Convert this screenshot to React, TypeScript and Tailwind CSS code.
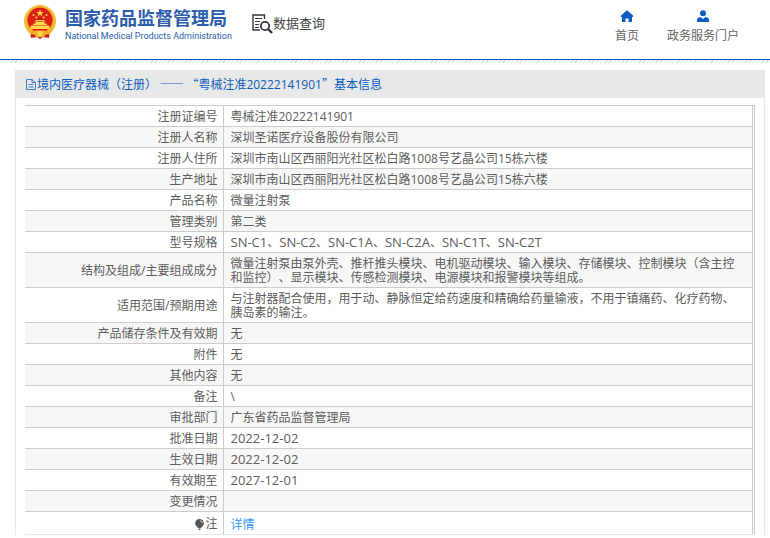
type Row = {
  label: string
  value: string
}

const rows: Row[] = [
  { label: '注册证编号', value: '粤械注准20222141901' },
  { label: '注册人名称', value: '深圳圣诺医疗设备股份有限公司' },
  { label: '注册人住所', value: '深圳市南山区西丽阳光社区松白路1008号艺晶公司15栋六楼' },
  { label: '生产地址', value: '深圳市南山区西丽阳光社区松白路1008号艺晶公司15栋六楼' },
  { label: '产品名称', value: '微量注射泵' },
  { label: '管理类别', value: '第二类' },
  { label: '型号规格', value: 'SN-C1、SN-C2、SN-C1A、SN-C2A、SN-C1T、SN-C2T' },
  {
    label: '结构及组成/主要组成成分',
    value:
      '微量注射泵由泵外壳、推杆推头模块、电机驱动模块、输入模块、存储模块、控制模块（含主控和监控）、显示模块、传感检测模块、电源模块和报警模块等组成。',
  },
  {
    label: '适用范围/预期用途',
    value:
      '与注射器配合使用，用于动、静脉恒定给药速度和精确给药量输液，不用于镇痛药、化疗药物、胰岛素的输注。',
  },
  { label: '产品储存条件及有效期', value: '无' },
  { label: '附件', value: '无' },
  { label: '其他内容', value: '无' },
  { label: '备注', value: '\\' },
  { label: '审批部门', value: '广东省药品监督管理局' },
  { label: '批准日期', value: '2022-12-02' },
  { label: '生效日期', value: '2022-12-02' },
  { label: '有效期至', value: '2027-12-01' },
  { label: '变更情况', value: '' },
]

// Model codes and dates are set one size up from the Chinese text
function CellText({ value }: { value: string }) {
  return value.split(/([A-Z0-9]+-[A-Z0-9-]+)/).map((part, index) =>
    index % 2 === 1 ? (
      <span key={index} className="text-[13px] leading-none">
        {part}
      </span>
    ) : (
      part
    ),
  )
}

function Emblem() {
  return (
    <svg className="size-9 shrink-0" viewBox="0 0 36 36" aria-hidden="true">
      <path d="M8 27 L28 27 L27 34 L21 33 L18 35 L15 33 L9 34 Z" fill="#d92318" />
      <circle cx="18" cy="17" r="16" fill="#f0b429" />
      <circle cx="18" cy="17" r="15" fill="none" stroke="#f9d65c" strokeWidth="1" strokeDasharray="2 1" />
      <circle cx="18" cy="16" r="12.5" fill="#dc1f18" />
      <path d="M18 5.5l1 2.6h2.7l-2.2 1.6.9 2.6-2.4-1.6-2.4 1.6.9-2.6-2.2-1.6H17z" fill="#fbd84b" />
      <g fill="#fbd84b">
        <circle cx="11.5" cy="11" r="1" />
        <circle cx="24.5" cy="11" r="1" />
        <circle cx="14.3" cy="13.6" r="1" />
        <circle cx="21.7" cy="13.6" r="1" />
        <path d="M12.5 17.5l1.5-1.5h8l1.5 1.5zM13.5 18h9v1.5h-9zM10.5 21l1.5-1.5h12l1.5 1.5zM8.5 21.5h19v3.5h-19z" />
      </g>
      <path d="M5 25q6 4 10 1l3 2 3-2q4 3 10-1l-3 5q-5 2-8 0l-2 2-2-2q-4 2-8 0z" fill="#f0b429" />
      <circle cx="18" cy="29" r="2.5" fill="#fbd84b" />
      <path d="M9 30l5 1-3 2zM27 30l-5 1 3 2z" fill="#dc1f18" />
    </svg>
  )
}

function QueryIcon() {
  return (
    <svg className="h-5 w-[21px] shrink-0" viewBox="0 0 21 20" fill="none" stroke="#35353d" aria-hidden="true">
      <path d="M12.5 5V1H1v15h7" strokeWidth="1.4" />
      <path d="M3 4.5h7M3 7.5h5M3 10.5h4M3 13.5h4" strokeWidth="1.2" />
      <circle cx="13" cy="12" r="4.2" strokeWidth="1.8" />
      <path d="M16 15l4 4" strokeWidth="2.4" />
    </svg>
  )
}

function HomeIcon() {
  return (
    <svg className="h-3 w-3" viewBox="0 0 12 12" fill="#0a5cc0" aria-hidden="true">
      <path d="M6 0.3L0 5.5V7h1v5h3.5V8.5h3V12H11V7h1V5.5z" />
    </svg>
  )
}

function UserIcon() {
  return (
    <svg className="h-3 w-3" viewBox="0 0 12 12" fill="#0a5cc0" aria-hidden="true">
      <circle cx="6" cy="3.2" r="3" />
      <path d="M0 12V10q0-2.500 3.500-3L6 9 8.500 7Q12 7.500 12 10v2z" />
    </svg>
  )
}

function FileIcon() {
  return (
    <svg className="h-[11px] w-[10px] shrink-0" viewBox="0 0 10 11" fill="none" stroke="#3f7cca" aria-hidden="true">
      <path d="M.500 .5h5.500L9.500 3.500v7h-9zM6 .5v3h3.500" />
      <path d="M2.500 5.500h5M2.500 8h5" />
    </svg>
  )
}

function BulbIcon() {
  return (
    <svg className="h-[11px] w-[9px] shrink-0" viewBox="0 0 9 11" aria-hidden="true">
      <path d="M4.500 0a4.300 4.300 0 0 1 2.500 7.800L6 9H3L2 7.800A4.300 4.300 0 0 1 4.500 0zM3.200 9.500h2.600L5.200 11H3.800z" fill="#555" />
      <path d="M5 1.700q2 .3 2.300 2.300" fill="none" stroke="#fff" strokeWidth=".8" />
    </svg>
  )
}

function App() {
  return (
    <div
      lang="zh-CN"
      className="bg-white font-['Open_Sans','Noto_Sans_CJK_SC',sans-serif] text-xs leading-[14px] text-[#5c5c5c] [text-spacing-trim:space-all]"
    >
      <header className="flex h-[59px] items-start justify-between pr-[31px] pl-[22px]">
        <div className="flex items-start">
          <a href="#" className="flex pt-1">
            <Emblem />
            <div className="pl-[7px] text-[#2b5dab]">
              <div className="font-['Noto_Sans_CJK_SC',sans-serif] text-lg leading-[26px] font-bold whitespace-nowrap">
                国家药品监督管理局
              </div>
              <div className="font-[Roboto,sans-serif] text-[9px] leading-3 whitespace-nowrap">
                National Medical Products Administration
              </div>
            </div>
          </a>
          <div className="flex items-start pt-[14px] pl-5 text-[13px] leading-[18px] text-[#444]">
            <QueryIcon />
            <span>数据查询</span>
          </div>
        </div>
        <nav className="flex gap-7 pt-[10px] text-[#666]">
          <a href="#" className="flex flex-col items-center gap-[7px]">
            <HomeIcon />
            首页
          </a>
          <a href="#" className="flex flex-col items-center gap-[7px]">
            <UserIcon />
            政务服务门户
          </a>
        </nav>
      </header>
      <div className="h-px bg-[#0a5cb8]" />
      <div className="h-[3px] bg-[repeating-linear-gradient(135deg,#ddd_0px,#ddd_1px,#fff_1px,#fff_3px)]" />

      <main className="mt-[7px] mr-[5px] ml-[15px] border-x border-[#e8e8e8]">
        <h1 className="flex h-7 items-center bg-[#e8e8e8] pl-[10px] font-['Noto_Sans_CJK_SC',sans-serif] text-[#0a5cc0]">
          <FileIcon />
          <span className="pl-px">
            境内医疗器械（注册） —— “粤械注准
            <span className="font-['Open_Sans',sans-serif]">20222141901</span>
            ”基本信息
          </span>
        </h1>
        <div className="mt-[7px] mr-[9px] mb-1 ml-[9px] border-t border-r border-[#ccc] pr-px">
          <table className="w-full border-r border-[#ccc]">
            <tbody>
              {rows.map((row) => (
                <tr key={row.label} className="border-b border-[#ccc] even:bg-[#f7f7f7]">
                  <th
                    scope="row"
                    className="w-[198px] border-r border-[#ccc] pt-1 pr-[5px] pb-[2px] text-right font-normal"
                  >
                    {row.label}
                  </th>
                  <td className="pt-1 pr-[10px] pb-[2px] pl-[7px]">
                    <CellText value={row.value} />
                  </td>
                </tr>
              ))}
              <tr className="border-b border-[#e6e6ee]">
                <th scope="row" className="border-r border-[#ccc] pt-[5px] pr-[5px] pb-[3px] font-normal">
                  <span className="flex items-center justify-end gap-px">
                    <BulbIcon />注
                  </span>
                </th>
                <td className="pt-[6px] pb-[2px] pl-[7px]">
                  <a href="#" className="text-[#3399ff]">
                    详情
                  </a>
                </td>
              </tr>
            </tbody>
          </table>
        </div>
      </main>
    </div>
  )
}

export default App
